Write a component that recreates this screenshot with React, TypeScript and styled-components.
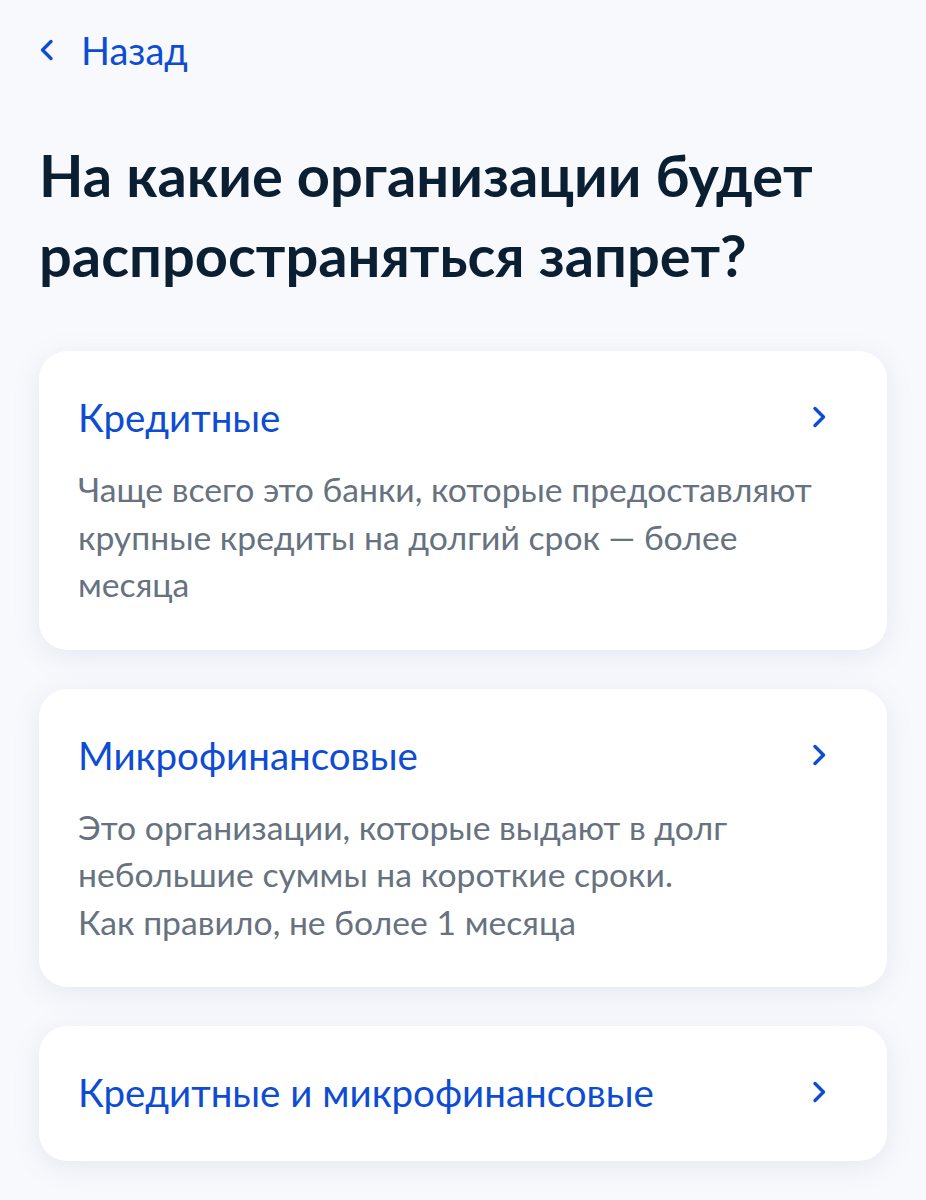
import React from 'react';
import styled, { createGlobalStyle } from 'styled-components';

const GlobalStyle = createGlobalStyle`
  body {
    margin: 0;
    background: #f8f9fd;
    font-family: Lato, "Noto Sans", sans-serif;
    -webkit-font-smoothing: antialiased;
  }
`;

const Page = styled.main`
  padding: 22px 39px 40px;
`;

const BackLink = styled.a`
  display: inline-flex;
  align-items: center;
  gap: 26px;
  color: #0d4cd3;
  font-size: 38px;
  line-height: 56px;
  cursor: pointer;
`;

const Title = styled.h1`
  margin: 57px 0 56px;
  color: #0b1f33;
  font-size: 57.8px;
  font-weight: 700;
  line-height: 80px;
`;

const List = styled.div`
  display: flex;
  flex-direction: column;
  gap: 39px;
`;

const Card = styled.div<{ $compact?: boolean }>`
  background: #ffffff;
  border-radius: 28px;
  padding: 42px 60px ${({ $compact }) => ($compact ? '45px' : '41px')} 39px;
  box-shadow: 0 6px 28px rgba(102, 119, 153, 0.12);
  cursor: pointer;
`;

const CardHead = styled.div`
  display: flex;
  align-items: center;
  justify-content: space-between;
`;

const CardTitle = styled.div`
  color: #0d4cd3;
  font-size: 38.5px;
  line-height: 48px;
`;

const CardText = styled.p`
  margin: 25px 0 0;
  color: #66727f;
  font-size: 33.7px;
  line-height: 47.5px;
  white-space: pre-line;
`;

const Chevron = ({ dir }: { dir: 'left' | 'right' }) => (
  <svg width="16" height="24" viewBox="0 0 16 24" fill="none">
    <path
      d={dir === 'right' ? 'M4 3.5l8.5 8.5L4 20.5' : 'M12 3.5L3.5 12l8.5 8.5'}
      stroke="#0d4cd3"
      strokeWidth="3.4"
      strokeLinecap="round"
      strokeLinejoin="round"
    />
  </svg>
);

const options = [
  {
    title: 'Кредитные',
    text: 'Чаще всего это банки, которые предоставляют крупные кредиты на долгий срок — более месяца',
  },
  {
    title: 'Микрофинансовые',
    text: 'Это организации, которые выдают в долг небольшие суммы на короткие сроки.\nКак правило, не более 1 месяца',
  },
  { title: 'Кредитные и микрофинансовые', text: '' },
];

export default function App() {
  return (
    <>
      <GlobalStyle />
      <Page>
        <BackLink>
          <Chevron dir="left" />
          Назад
        </BackLink>
        <Title>На какие организации будет распространяться запрет?</Title>
        <List>
          {options.map((o) => (
            <Card key={o.title} $compact={!o.text}>
              <CardHead>
                <CardTitle>{o.title}</CardTitle>
                <Chevron dir="right" />
              </CardHead>
              {o.text && <CardText>{o.text}</CardText>}
            </Card>
          ))}
        </List>
      </Page>
    </>
  );
}
